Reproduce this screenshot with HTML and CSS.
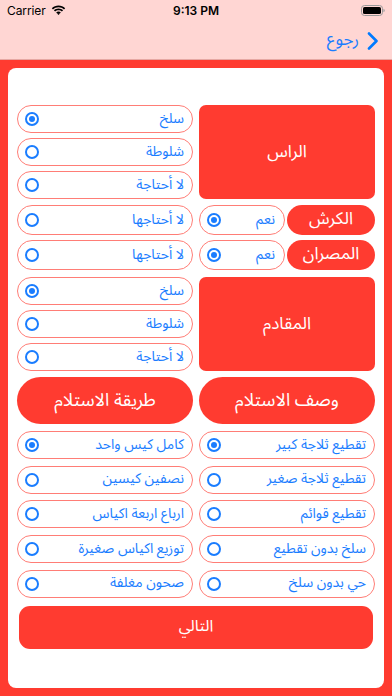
FILE: index.html
```html
<!DOCTYPE html>
<html lang="ar">
<head>
<meta charset="utf-8">
<meta name="viewport" content="width=device-width, initial-scale=1">
<link rel="stylesheet" href="styles.css">
</head>
<body>
<div class="top">
  <div class="status">
    <div class="status-left">
      <span class="carrier">Carrier</span>
      <svg class="wifi" width="15" height="11" viewBox="0 0 15 11"><path d="M7.5 2.2c2.1 0 4 .8 5.5 2.2l1.2-1.2C12.4 1.4 10 .4 7.5.4S2.6 1.4.8 3.2L2 4.4c1.5-1.4 3.4-2.2 5.5-2.2z" fill="#000"/><path d="M7.5 5.2c1.3 0 2.5.5 3.4 1.3l1.2-1.2C10.9 4.1 9.3 3.4 7.5 3.4S4.1 4.1 2.9 5.3l1.2 1.2c.9-.8 2.1-1.3 3.4-1.3z" fill="#000"/><path d="M7.5 8.1c.5 0 1 .2 1.4.5L7.5 10 6.1 8.6c.4-.3.9-.5 1.4-.5z" fill="#000"/><path d="M7.5 6.6c.9 0 1.7.3 2.3.9L8.9 8.4c-.4-.3-.9-.5-1.4-.5s-1 .2-1.4.5l-.9-.9c.6-.6 1.4-.9 2.3-.9z" fill="#000"/></svg>
    </div>
    <div class="time">9:13 PM</div>
    <div class="status-right">
      <svg width="24" height="11" viewBox="0 0 24 11"><rect x="0.5" y="0.5" width="21" height="10" rx="3" fill="none" stroke="#999" stroke-width="1"/><rect x="2" y="2" width="18" height="7" rx="1.6" fill="#000"/><path d="M22.5 3.8v3.4c.7-.2 1.2-.9 1.2-1.7s-.5-1.5-1.2-1.7z" fill="#999"/></svg>
    </div>
  </div>
  <div class="nav" dir="rtl">
    <svg class="chev" width="12" height="18" viewBox="0 0 12 18"><path d="M2 1.5l7.5 7.5L2 16.5" fill="none" stroke="#007aff" stroke-width="2.6" stroke-linecap="round" stroke-linejoin="round"/></svg>
    <span class="back">رجوع</span>
  </div>
</div>

<div class="main">
  <div class="card" dir="rtl">

    <div class="section">
      <div class="box">الراس</div>
      <div class="stack">
        <div class="pill"><span>سلخ</span><i class="radio on"></i></div>
        <div class="pill"><span>شلوطة</span><i class="radio"></i></div>
        <div class="pill"><span>لا أحتاجة</span><i class="radio"></i></div>
      </div>
    </div>

    <div class="yesno">
      <div class="yn-row">
        <div class="half">
          <div class="tag">الكرش</div>
          <div class="pill tall yes"><span>نعم</span><i class="radio on"></i></div>
        </div>
        <div class="pill tall"><span>لا أحتاجها</span><i class="radio"></i></div>
      </div>
      <div class="yn-row">
        <div class="half">
          <div class="tag">المصران</div>
          <div class="pill tall yes"><span>نعم</span><i class="radio on"></i></div>
        </div>
        <div class="pill tall"><span>لا أحتاجها</span><i class="radio"></i></div>
      </div>
    </div>

    <div class="section s3">
      <div class="box">المقادم</div>
      <div class="stack">
        <div class="pill"><span>سلخ</span><i class="radio on"></i></div>
        <div class="pill"><span>شلوطة</span><i class="radio"></i></div>
        <div class="pill"><span>لا أحتاجة</span><i class="radio"></i></div>
      </div>
    </div>

    <div class="heads">
      <div class="head">وصف الاستلام</div>
      <div class="head">طريقة الاستلام</div>
    </div>

    <div class="grid">
      <div class="pill"><span>تقطيع ثلاجة كبير</span><i class="radio on"></i></div>
      <div class="pill"><span>كامل كيس واحد</span><i class="radio on"></i></div>
      <div class="pill"><span>تقطيع ثلاجة صغير</span><i class="radio"></i></div>
      <div class="pill"><span>نصفين كيسين</span><i class="radio"></i></div>
      <div class="pill"><span>تقطيع قوائم</span><i class="radio"></i></div>
      <div class="pill"><span>ارباع اربعة اكياس</span><i class="radio"></i></div>
      <div class="pill"><span>سلخ بدون تقطيع</span><i class="radio"></i></div>
      <div class="pill"><span>توزيع اكياس صغيرة</span><i class="radio"></i></div>
      <div class="pill"><span>حي بدون سلخ</span><i class="radio"></i></div>
      <div class="pill"><span>صحون مغلفة</span><i class="radio"></i></div>
    </div>

    <div class="next">التالي</div>
  </div>
</div>
</body>
</html>
```

FILE: styles.css
```css
* { box-sizing: border-box; }
html, body { margin: 0; padding: 0; }
body {
  width: 392px;
  height: 696px;
  background: #ff3b30;
  font-family: "Noto Sans Arabic", "DejaVu Sans", sans-serif;
  overflow: hidden;
}
.top {
  background: #ffd6d3;
  height: 60px;
  border-bottom: 0.5px solid #e6a8a3;
}
.status {
  height: 20px;
  display: flex;
  align-items: center;
  justify-content: space-between;
  padding: 0 7px;
  font-family: "Inter", "Liberation Sans", sans-serif;
  font-size: 12px;
  color: #000;
  position: relative;
}
.status-left { display: flex; align-items: center; gap: 5px; width: 80px; }
.status-left .carrier { letter-spacing: -0.1px; }
.time { font-weight: 600; font-size: 12px; }
.status-right { width: 80px; display: flex; justify-content: flex-end; padding-top: 1px; }
.nav {
  height: 40px;
  display: flex;
  align-items: center;
  padding-right: 13px;
  gap: 8px;
}
.chev { margin-top: 1px; }
.back {
  color: #1a7dff;
  font-size: 17px;
  margin-top: -1px;
}
.main {
  padding: 8px;
}
.card {
  background: #fff;
  border-radius: 8px;
  height: 620px;
  padding: 37px 9px 0;
  display: flex;
  flex-direction: column;
}
.section {
  display: grid;
  grid-template-columns: 176px 176px;
  column-gap: 6px;
  height: 94px;
}
.s3 { margin-top: 7px; }
.box {
  background: #ff3b30;
  border-radius: 7px;
  color: #fff;
  font-size: 17px;
  display: flex;
  align-items: center;
  justify-content: center;
}
.stack {
  display: flex;
  flex-direction: column;
  gap: 5px;
}
.pill {
  height: 28px;
  border: 1px solid #ff7d76;
  border-radius: 15px;
  display: flex;
  align-items: center;
  justify-content: space-between;
  padding: 0 8px 0 7px;
  color: #1a7dff;
  font-size: 14px;
  white-space: nowrap;
}
.pill span { margin-top: -2px; }
.pill.tall { height: 30px; }
.radio {
  width: 14px;
  height: 14px;
  border: 2px solid #1a7dff;
  border-radius: 50%;
  display: flex;
  align-items: center;
  justify-content: center;
  flex: none;
}
.radio.on::after {
  content: "";
  width: 6px;
  height: 6px;
  border-radius: 50%;
  background: #1a7dff;
}
.yesno {
  margin-top: 6px;
  display: flex;
  flex-direction: column;
  gap: 5px;
}
.yn-row {
  display: grid;
  grid-template-columns: 176px 176px;
  column-gap: 6px;
}
.half {
  display: flex;
  gap: 2px;
}
.tag {
  width: 88px;
  height: 30px;
  background: #ff3b30;
  border-radius: 15px;
  color: #fff;
  font-size: 17px;
  display: flex;
  align-items: center;
  justify-content: center;
  padding-bottom: 2px;
}
.pill.yes { width: 86px; padding-right: 9px; }
.heads {
  margin-top: 6px;
  display: grid;
  grid-template-columns: 176px 176px;
  column-gap: 6px;
}
.head {
  height: 47px;
  background: #ff3b30;
  border-radius: 24px;
  color: #fff;
  font-size: 18px;
  display: flex;
  align-items: center;
  justify-content: center;
  padding-bottom: 2px;
}
.grid {
  margin-top: 7px;
  display: grid;
  grid-template-columns: 176px 176px;
  column-gap: 6px;
  row-gap: 6.7px;
}
.next {
  margin: 8px 2px 0;
  height: 43px;
  background: #ff3b30;
  border-radius: 11px;
  color: #fff;
  font-size: 16px;
  display: flex;
  align-items: center;
  justify-content: center;
  padding-bottom: 2px;
}
```
